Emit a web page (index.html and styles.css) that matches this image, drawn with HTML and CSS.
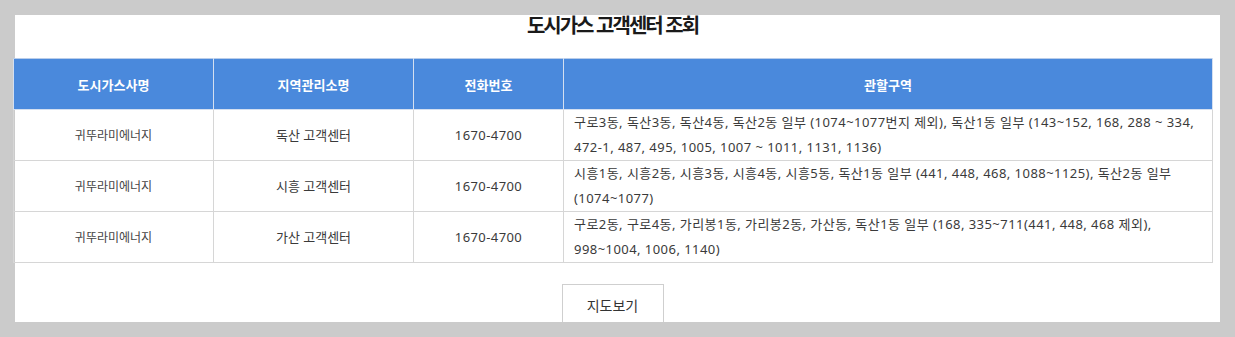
FILE: index.html
```html
<!DOCTYPE html>
<html lang="ko">
<head>
<meta charset="utf-8">
<title>도시가스 고객센터 조회</title>
<link rel="stylesheet" href="styles.css">
</head>
<body>
<div class="panel">
  <div class="content">
    <h2 class="title">도시가스 고객센터 조회</h2>
    <table class="centers">
      <colgroup>
        <col class="c1"><col class="c2"><col class="c3"><col class="c4">
      </colgroup>
      <thead>
        <tr>
          <th>도시가스사명</th>
          <th>지역관리소명</th>
          <th>전화번호</th>
          <th>관할구역</th>
        </tr>
      </thead>
      <tbody>
        <tr>
          <td class="company">귀뚜라미에너지</td>
          <td>독산 고객센터</td>
          <td class="phone">1670-4700</td>
          <td class="area">구로3동, 독산3동, 독산4동, 독산2동 일부 (1074~1077번지 제외), 독산1동 일부 (143~152, 168, 288 ~ 334, 472-1, 487, 495, 1005, 1007 ~ 1011, 1131, 1136)</td>
        </tr>
        <tr>
          <td class="company">귀뚜라미에너지</td>
          <td>시흥 고객센터</td>
          <td class="phone">1670-4700</td>
          <td class="area">시흥1동, 시흥2동, 시흥3동, 시흥4동, 시흥5동, 독산1동 일부 (441, 448, 468, 1088~1125), 독산2동 일부 (1074~1077)</td>
        </tr>
        <tr>
          <td class="company">귀뚜라미에너지</td>
          <td>가산 고객센터</td>
          <td class="phone">1670-4700</td>
          <td class="area">구로2동, 구로4동, 가리봉1동, 가리봉2동, 가산동, 독산1동 일부 (168, 335~711(441, 448, 468 제외), 998~1004, 1006, 1140)</td>
        </tr>
      </tbody>
    </table>
    <div class="actions">
      <button class="map-btn" type="button">지도보기</button>
    </div>
  </div>
</div>
</body>
</html>
```
FILE: styles.css
```css
html, body {
  margin: 0;
  padding: 0;
  background: #cbcbcb;
}
body {
  font-family: "Noto Sans", "Noto Sans CJK KR", sans-serif;
  color: #333;
}
.panel {
  margin: 15px 15px 0 15px;
  width: 1205px;
  height: 307px;
  background: #fff;
}
.content {
  width: 1199px;
  margin-left: -2px;
}
.title {
  margin: 0 0 23px;
  font-family: "Noto Sans CJK KR", sans-serif;
  font-size: 20px;
  line-height: 20px;
  font-weight: 700;
  letter-spacing: -2px;
  text-align: center;
  color: #1a1a1a;
}
.centers {
  width: 1199px;
  border-collapse: collapse;
  table-layout: fixed;
  font-size: 13px;
}
.c1, .c2 { width: 200px; }
.c3 { width: 150px; }
.c4 { width: 649px; }
.centers th {
  height: 50px;
  padding: 0;
  background: #4a89dc;
  color: #fff;
  font-family: "Noto Sans CJK KR", sans-serif;
  font-weight: 700;
  font-size: 13px;
  border: 1px solid #d4dff0;
  border-top-color: #b9cdea;
}
.centers td {
  height: 50px;
  padding: 0 10px;
  line-height: 25px;
  text-align: center;
  border: 1px solid #d6d6d6;
  color: #3a3a3a;
}
.centers td.company {
  font-size: 12px;
  color: #444;
}
.centers td.phone {
  letter-spacing: 0.4px;
}
.centers td.area {
  text-align: left;
  letter-spacing: 0.45px;
}
.actions {
  display: flex;
  justify-content: center;
  padding-top: 21px;
}
.map-btn {
  width: 102px;
  height: 41px;
  background: #fff;
  border: 1px solid #cfcfcf;
  border-bottom-color: #a9a9a9;
  font-family: "Noto Sans CJK KR", sans-serif;
  font-size: 14px;
  color: #333;
  padding: 0;
}
```
